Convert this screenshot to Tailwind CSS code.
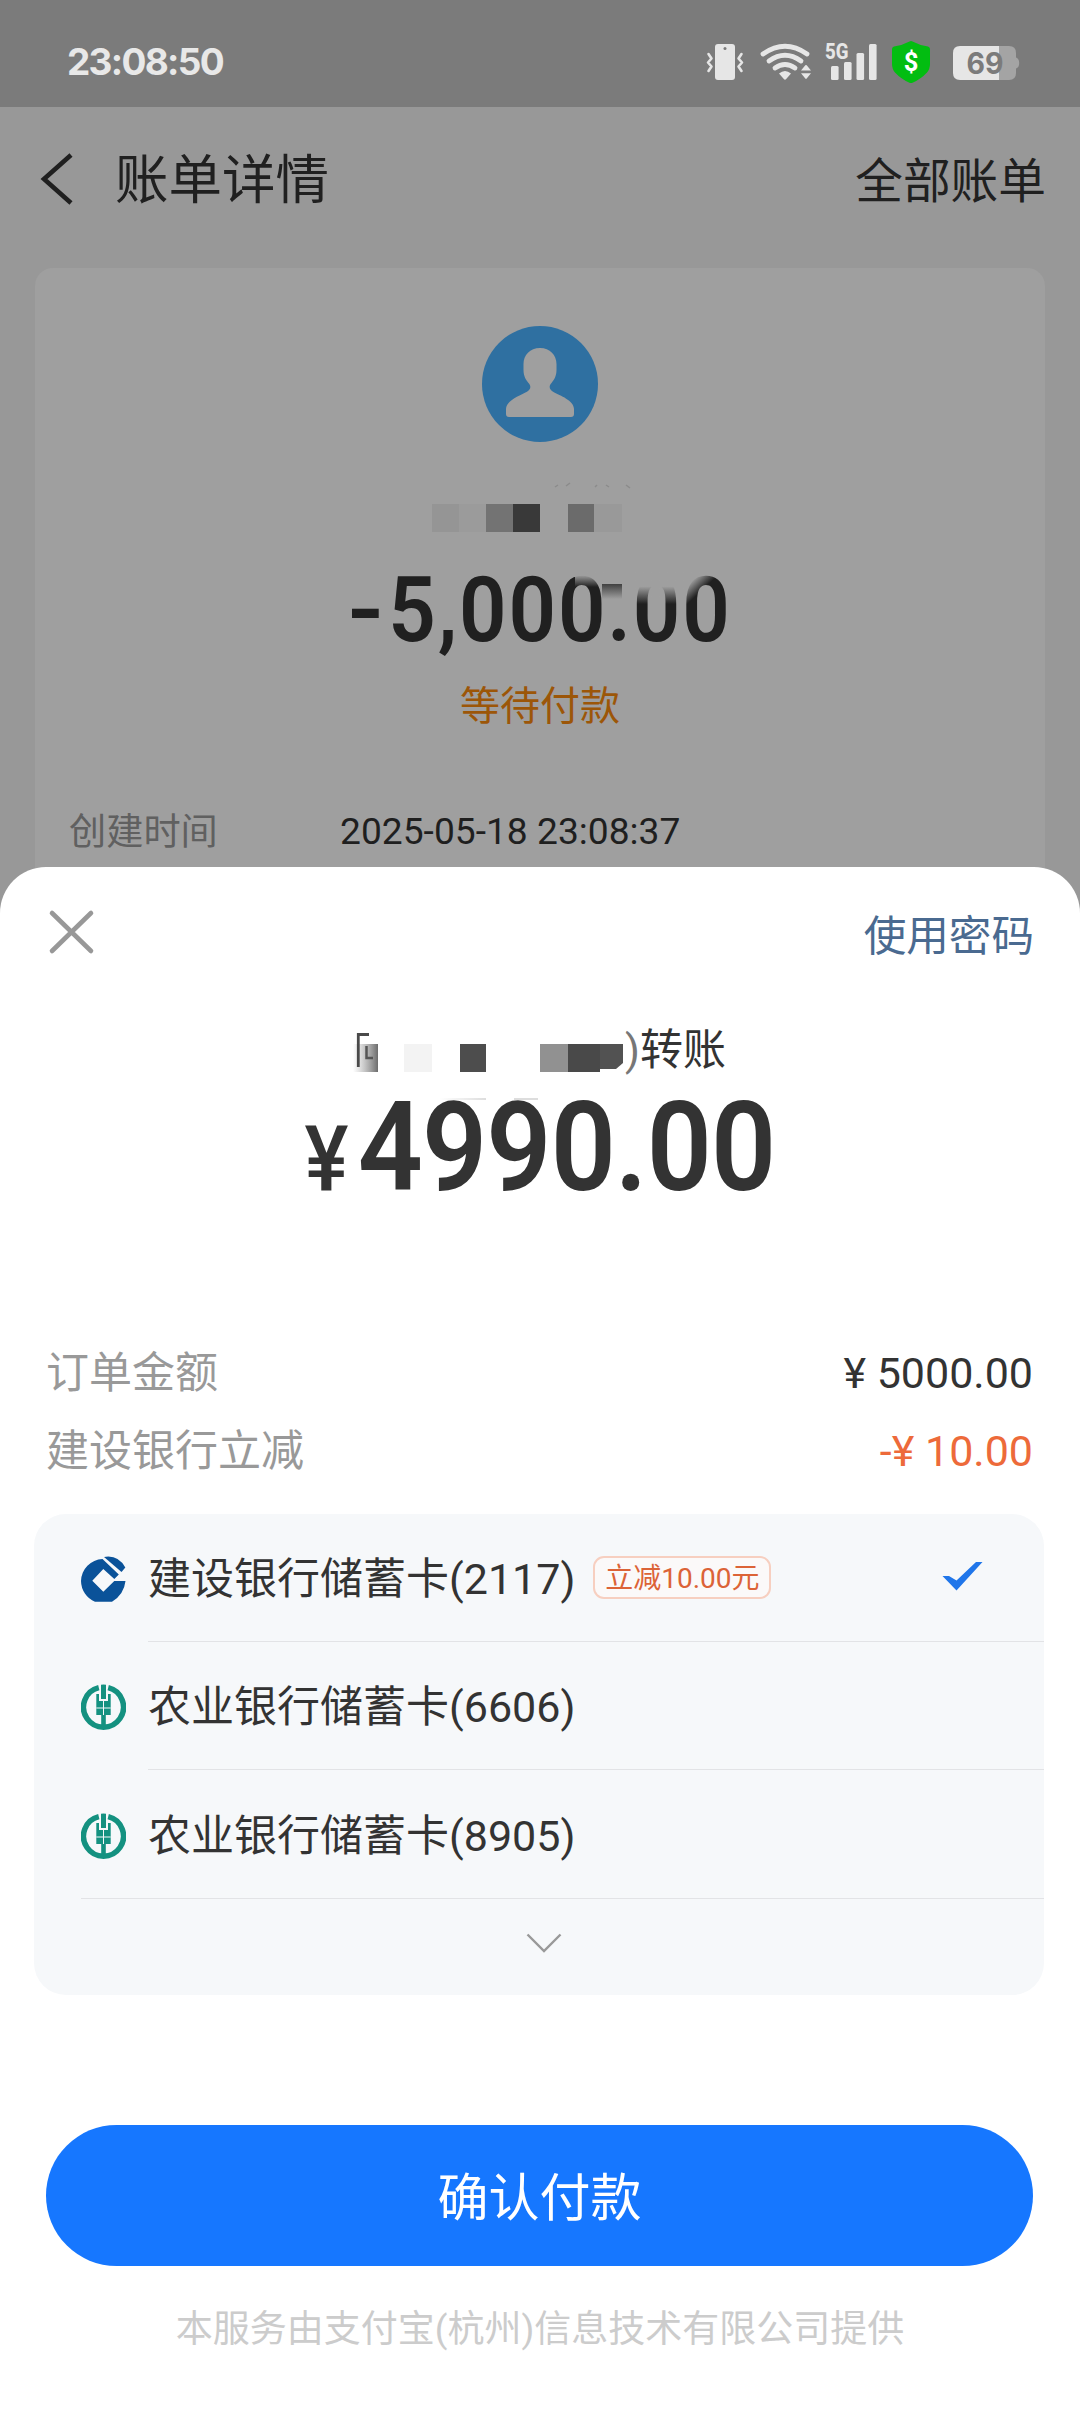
<!DOCTYPE html>
<html lang="zh-CN">
<head>
<meta charset="utf-8">
<title>账单详情</title>
<script src="https://cdn.jsdelivr.net/npm/@tailwindcss/browser@4"></script>
</head>
<body class="relative h-[2412px] w-[1080px] overflow-hidden bg-[#989898] font-[Roboto,'Noto_Sans_CJK_SC',sans-serif] text-[#333]">

  <!-- Status bar -->
  <header class="flex h-[107px] items-start justify-between bg-[#7b7b7b] pr-[40px] pl-[67px]">
    <div class="mt-[40px] font-[Inter,sans-serif] text-[37px] leading-[44px] font-bold tracking-[-1.7px] text-[#e8e8e8]">23:08:50</div>
    <svg class="mt-[34px] h-[56px] w-[380px]" viewBox="660 34 380 56" fill="#e6e6e6">
      <rect x="715" y="44" width="20" height="36" rx="3"/>
      <circle cx="725" cy="48.5" r="1.5" fill="#7b7b7b"/>
      <path d="M708.500 54 l3 4.500 -3.500 4 3.500 4 -3 4.500 M741.500 54 l-3 4.500 3.500 4 -3.500 4 3 4.500" fill="none" stroke="#e6e6e6" stroke-width="2.600" stroke-linecap="round" stroke-linejoin="round"/>
      <g fill="none" stroke="#e6e6e6" stroke-width="4.800" stroke-linecap="round">
        <path d="M763 54 Q785 38.500 807 54"/>
        <path d="M769 61 Q785 49.500 801 61"/>
        <path d="M775 68 Q785 61 795 68"/>
      </g>
      <path d="M779 73.500 Q785 68.500 791 73.500 L786.200 79 Q785 80.300 783.800 79 Z"/>
      <path d="M801 70.500 L805.300 65.300 Q806 64.500 806.700 65.300 L811 70.500 Z M801 73.300 L811 73.300 L806.700 78.500 Q806 79.300 805.300 78.500 Z"/>
      <text x="825" y="59" font-family="Roboto, sans-serif" font-weight="800" font-size="21.500" textLength="23.500" lengthAdjust="spacingAndGlyphs">5G</text>
      <rect x="831" y="66" width="7.600" height="14" rx="1.500"/>
      <rect x="844" y="62" width="7.600" height="18" rx="1.500"/>
      <rect x="856.500" y="53" width="7.600" height="27" rx="1.500"/>
      <rect x="869" y="44" width="7.600" height="36" rx="1.500"/>
      <path d="M909.500 41.500 Q911 40.700 912.500 41.500 Q920 45.500 928 46.500 Q930 47 930 49 V64 Q930 69 927 72.500 Q921 79 912.500 82.800 Q911 83.400 909.500 82.800 Q901 79 895 72.500 Q892 69 892 64 V49 Q892 47 894 46.500 Q902 45.500 909.500 41.500 Z" fill="#02bd11"/>
      <text x="911" y="71" text-anchor="middle" font-family="Roboto, sans-serif" font-weight="700" font-size="25.500" fill="#fff">$</text>
      <path d="M999 46 H1009 Q1016 46 1016 53 V57.500 Q1019.200 58.500 1019.200 63 Q1019.200 67.500 1016 68.500 V73 Q1016 80 1009 80 H999 Z" fill="#a4a4a4"/>
      <path d="M960 46 H999 V80 H960 Q953 80 953 73 V53 Q953 46 960 46 Z"/>
      <text x="985" y="73.800" text-anchor="middle" font-family="Inter, sans-serif" font-weight="700" font-size="29.500" fill="#7b7b7b" textLength="37" lengthAdjust="spacingAndGlyphs">69</text>
    </svg>
  </header>

  <!-- Navigation bar -->
  <nav class="flex h-[161px] items-start justify-between pr-[34px] pl-[40px] text-[#202020]">
    <div class="flex items-start">
      <svg class="mt-[46px] h-[52px] w-[33px]" viewBox="0 0 33 52" fill="none" stroke="#202020" stroke-width="4.600"><path d="M31 2 L4 26 L31 50" /></svg>
      <h1 class="mt-[44px] ml-[42px] text-[53.5px] leading-[60px]">账单详情</h1>
    </div>
    <a class="mt-[46px] text-[47.700px] leading-[58px]">全部账单</a>
  </nav>

  <!-- Bill card -->
  <main class="mx-[35px] flex h-[700px] flex-col items-center rounded-t-[18px] bg-[#9f9f9f]">
    <svg class="mt-[58px] h-[116px] w-[116px]" viewBox="0 0 116 116">
      <circle cx="58" cy="58" r="58" fill="#2f70a1"/>
      <path d="M58 22 C68 22 74.500 29 74.500 38 V44 C74.500 50 72 54 69.500 57 C66 61 68 64 71.500 66 C78 69.500 92 74.500 92 83 V88 Q92 91 89 91 H27 Q24 91 24 88 V83 C24 74.500 38 69.500 44.500 66 C48 64 50 61 46.500 57 C44 54 41.500 50 41.500 44 V38 C41.500 29 48 22 58 22 Z" fill="#9f9f9f"/>
    </svg>
    <svg class="mt-[38px] h-[52px] w-[216px] overflow-visible" viewBox="432 480 216 52">
      <path d="M555 487 l3 -2 M566 486 l4 -3 M595 487 l2 -2 M606 485 l3 2 M626 485 l4 3" stroke="#8b8b8b" stroke-width="1.500" fill="none"/>
      <rect x="432" y="504" width="27" height="28" fill="#959595"/>
      <rect x="459" y="504" width="27" height="28" fill="#9b9b9b"/>
      <rect x="486" y="504" width="27" height="28" fill="#737373"/>
      <rect x="513" y="504" width="27" height="28" fill="#393939"/>
      <rect x="568" y="504" width="26" height="28" fill="#6b6b6b"/>
      <rect x="594" y="504" width="28" height="28" fill="#999"/>
    </svg>
    <div class="relative mt-[24px] h-[106px] w-[460px]">
      <div class="mt-[1px] ml-[2px] flex origin-center scale-x-92 justify-center text-[90.5px] leading-[106px] font-semibold tracking-[2px] text-[#202020]"><span class="mr-[6px] inline-block origin-center scale-x-120">-</span>5,000.00</div>
      <div class="absolute top-[16px] left-[265px] h-[15px] w-[31px] bg-linear-to-b from-[#9f9f9f] from-20% to-[#9f9f9f]/0"></div>
      <div class="absolute top-[28px] left-[292px] h-[15px] w-[20px] bg-linear-to-b from-[#404040] to-[#9f9f9f]/0"></div>
      <div class="absolute top-[16px] left-[322px] h-[32px] w-[52px] bg-linear-to-b from-[#9f9f9f] from-45% to-[#9f9f9f]/0"></div>
      <div class="absolute top-[16px] left-[374px] h-[32px] w-[34px] bg-linear-to-br from-[#9f9f9f] from-25% to-[#9f9f9f]/0 to-55%"></div>
    </div>
    <p class="mt-[20px] text-[40px] leading-[50px] text-[#9c5608]">等待付款</p>
    <dl class="mt-[75px] flex w-full pl-[34px] text-[37.200px] leading-[50px]">
      <dt class="w-[271px] text-[#606060]">创建时间</dt>
      <dd class="-mt-[1px] text-[#1f1f1f]">2025-05-18 23:08:37</dd>
    </dl>
  </main>

  <!-- Payment sheet -->
  <section class="absolute inset-x-0 bottom-0 flex h-[1545px] flex-col rounded-t-[46px] bg-white">
    <div class="flex h-[140px] items-start justify-between pr-[46px] pl-[48px]">
      <svg class="mt-[42px] h-[46px] w-[47px]" viewBox="0 0 47 46" fill="none" stroke="#989898" stroke-width="4.600" stroke-linecap="round"><path d="M4 4 L43 42 M43 4 L4 42"/></svg>
      <a class="mt-[44px] text-[42.600px] leading-[50px] text-[#4a6a90]">使用密码</a>
    </div>

    <div class="flex h-[80px] items-start pl-[353px]">
      <svg class="mt-[20px] h-[50px] w-[270px] overflow-visible" viewBox="353 1027 270 50">
        <defs>
          <linearGradient id="edge" x1="0" x2="1"><stop offset="0" stop-color="#999" stop-opacity="0"/><stop offset="1" stop-color="#6c6c6c"/></linearGradient>
          <linearGradient id="smear" x1="0" x2="1"><stop offset="0" stop-color="#ddd" stop-opacity="0"/><stop offset="1" stop-color="#ddd"/></linearGradient>
        </defs>
        <rect x="353" y="1044" width="25" height="28" fill="url(#edge)"/>
        <path d="M358.300 1067 V1034.500 H369" fill="none" stroke="#4a4a4a" stroke-width="2.800"/>
        <path d="M366.500 1046 V1058 H373" fill="none" stroke="#555" stroke-width="2.500"/>
        <rect x="404" y="1044" width="28" height="28" fill="#f3f3f3"/>
        <rect x="460" y="1044" width="26" height="28" fill="#4d4d4d"/>
        <rect x="540" y="1044" width="28" height="28" fill="#919191"/>
        <path d="M568 1044 H600 V1072 H568 Z" fill="#494949"/>
        <path d="M600 1044 H623 V1063 L616 1069 H600 Z" fill="#525252"/>
        <rect x="440" y="1098" width="46" height="2" fill="url(#smear)"/>
        <rect x="514" y="1098" width="24" height="2" fill="#ddd"/>
      </svg>
      <p class="mt-[18px] ml-[2px] text-[43px] leading-[50px]"><span class="text-[#777]">)</span>转账</p>
    </div>

    <div class="flex h-[255px] items-start justify-center">
      <div class="-mt-[14px] -ml-[1px] flex origin-center scale-x-92 items-baseline gap-[10px] leading-[150px] font-semibold">
        <span class="text-[90px] font-medium">¥</span><span class="text-[124px] tracking-[-0.9px]">4990.00</span>
      </div>
    </div>

    <dl class="flex h-[172px] flex-col gap-[18px] pr-[47px] pl-[46px] pt-[1px] text-[43px] leading-[60px]">
      <div class="flex justify-between"><dt class="text-[#999]">订单金额</dt><dd>¥ 5000.00</dd></div>
      <div class="flex justify-between"><dt class="text-[#999]">建设银行立减</dt><dd class="text-[#ed6a3a]">-¥ 10.00</dd></div>
    </dl>

    <ul class="mr-[36px] ml-[34px] h-[481px] shrink-0 rounded-[32px] bg-[#f6f8fa] pl-[47px] text-[43px]">
      <li class="flex h-[128px] items-stretch gap-[22px]">
        <svg class="mt-[42px] h-[46px] w-[45px] shrink-0" viewBox="0 0 45 46" fill="#0a5299">
          <path d="M21.500 3 L37.800 18.500 L33.300 23 L22.300 13 L11.300 24.700 L22.300 35.700 L33.300 25 H44.500 Q43 38.500 31 45.800 H14 A23 23 0 0 1 0 25 A22.500 22.500 0 0 1 21.500 3 Z"/>
          <path d="M23 1 Q37 -1.500 44.300 11.500 L40.500 16 Z"/>
        </svg>
        <div class="flex flex-1 items-center border-b border-[#e2e3e6]">
          <span class="mt-[3px] leading-[60px]">建设银行储蓄卡(2117)</span>
          <span class="-mt-[1px] ml-[18px] flex h-[43px] w-[178px] items-center justify-center rounded-[11px] border-2 border-[#f7cfc0] bg-[#fbf9f9] pt-[3px] text-[28px] leading-[36px] text-[#dc6337]">立减10.00元</span>
          <svg class="-mt-[4px] mr-[61px] ml-auto h-[30px] w-[41px]" viewBox="0 0 41 30" fill="#2076ea"><path d="M0.500 15 H7 L14.500 19.500 L34 1 H40.500 L14.500 29.500 Z"/></svg>
        </div>
      </li>
      <li class="flex h-[128px] items-stretch gap-[22px]">
        <svg class="mt-[42px] h-[46px] w-[45px] shrink-0" viewBox="0 0 45 46">
          <path d="M17.800 3.700 A20 20 0 1 0 27.200 3.700" fill="none" stroke="#149180" stroke-width="5.500"/>
          <path d="M20 0.800 Q22.500 0 25 0.800 V15 H20 Z M15.300 10 H18 V17 H27 V10 H29.700 V31 H24.800 V42 H20.200 V31 H15.300 Z" fill="#149180"/>
          <path d="M15.300 24 H29.700 M22.500 17 V31" stroke="#f6f8fa" stroke-width="1"/>
        </svg>
        <div class="flex flex-1 items-center border-b border-[#e2e3e6]"><span class="mt-[3px] leading-[60px]">农业银行储蓄卡(6606)</span></div>
      </li>
      <li class="flex h-[129px] items-stretch gap-[22px] border-b border-[#e2e3e6]">
        <svg class="mt-[43px] h-[46px] w-[45px] shrink-0" viewBox="0 0 45 46">
          <path d="M17.800 3.700 A20 20 0 1 0 27.200 3.700" fill="none" stroke="#149180" stroke-width="5.500"/>
          <path d="M20 0.800 Q22.500 0 25 0.800 V15 H20 Z M15.300 10 H18 V17 H27 V10 H29.700 V31 H24.800 V42 H20.200 V31 H15.300 Z" fill="#149180"/>
          <path d="M15.300 24 H29.700 M22.500 17 V31" stroke="#f6f8fa" stroke-width="1"/>
        </svg>
        <div class="flex flex-1 items-center"><span class="mt-[4px] leading-[60px]">农业银行储蓄卡(8905)</span></div>
      </li>
      <li class="flex h-[96px] items-start pl-[445px]">
        <svg class="mt-[34px] h-[21px] w-[36px]" viewBox="0 0 36 21" fill="none" stroke="#999" stroke-width="2.400"><path d="M1.500 1.500 L18 18 L34.500 1.500"/></svg>
      </li>
    </ul>

    <button class="mr-[47px] ml-[46px] mt-[130px] flex h-[141px] shrink-0 items-center justify-center rounded-full bg-[#1677ff] pt-[6px] text-[51px] leading-[60px] text-white">确认付款</button>
    <p class="mt-[39px] text-center text-[37px] leading-[50px] text-[#ccc]">本服务由支付宝(杭州)信息技术有限公司提供</p>
  </section>
</body>
</html>
